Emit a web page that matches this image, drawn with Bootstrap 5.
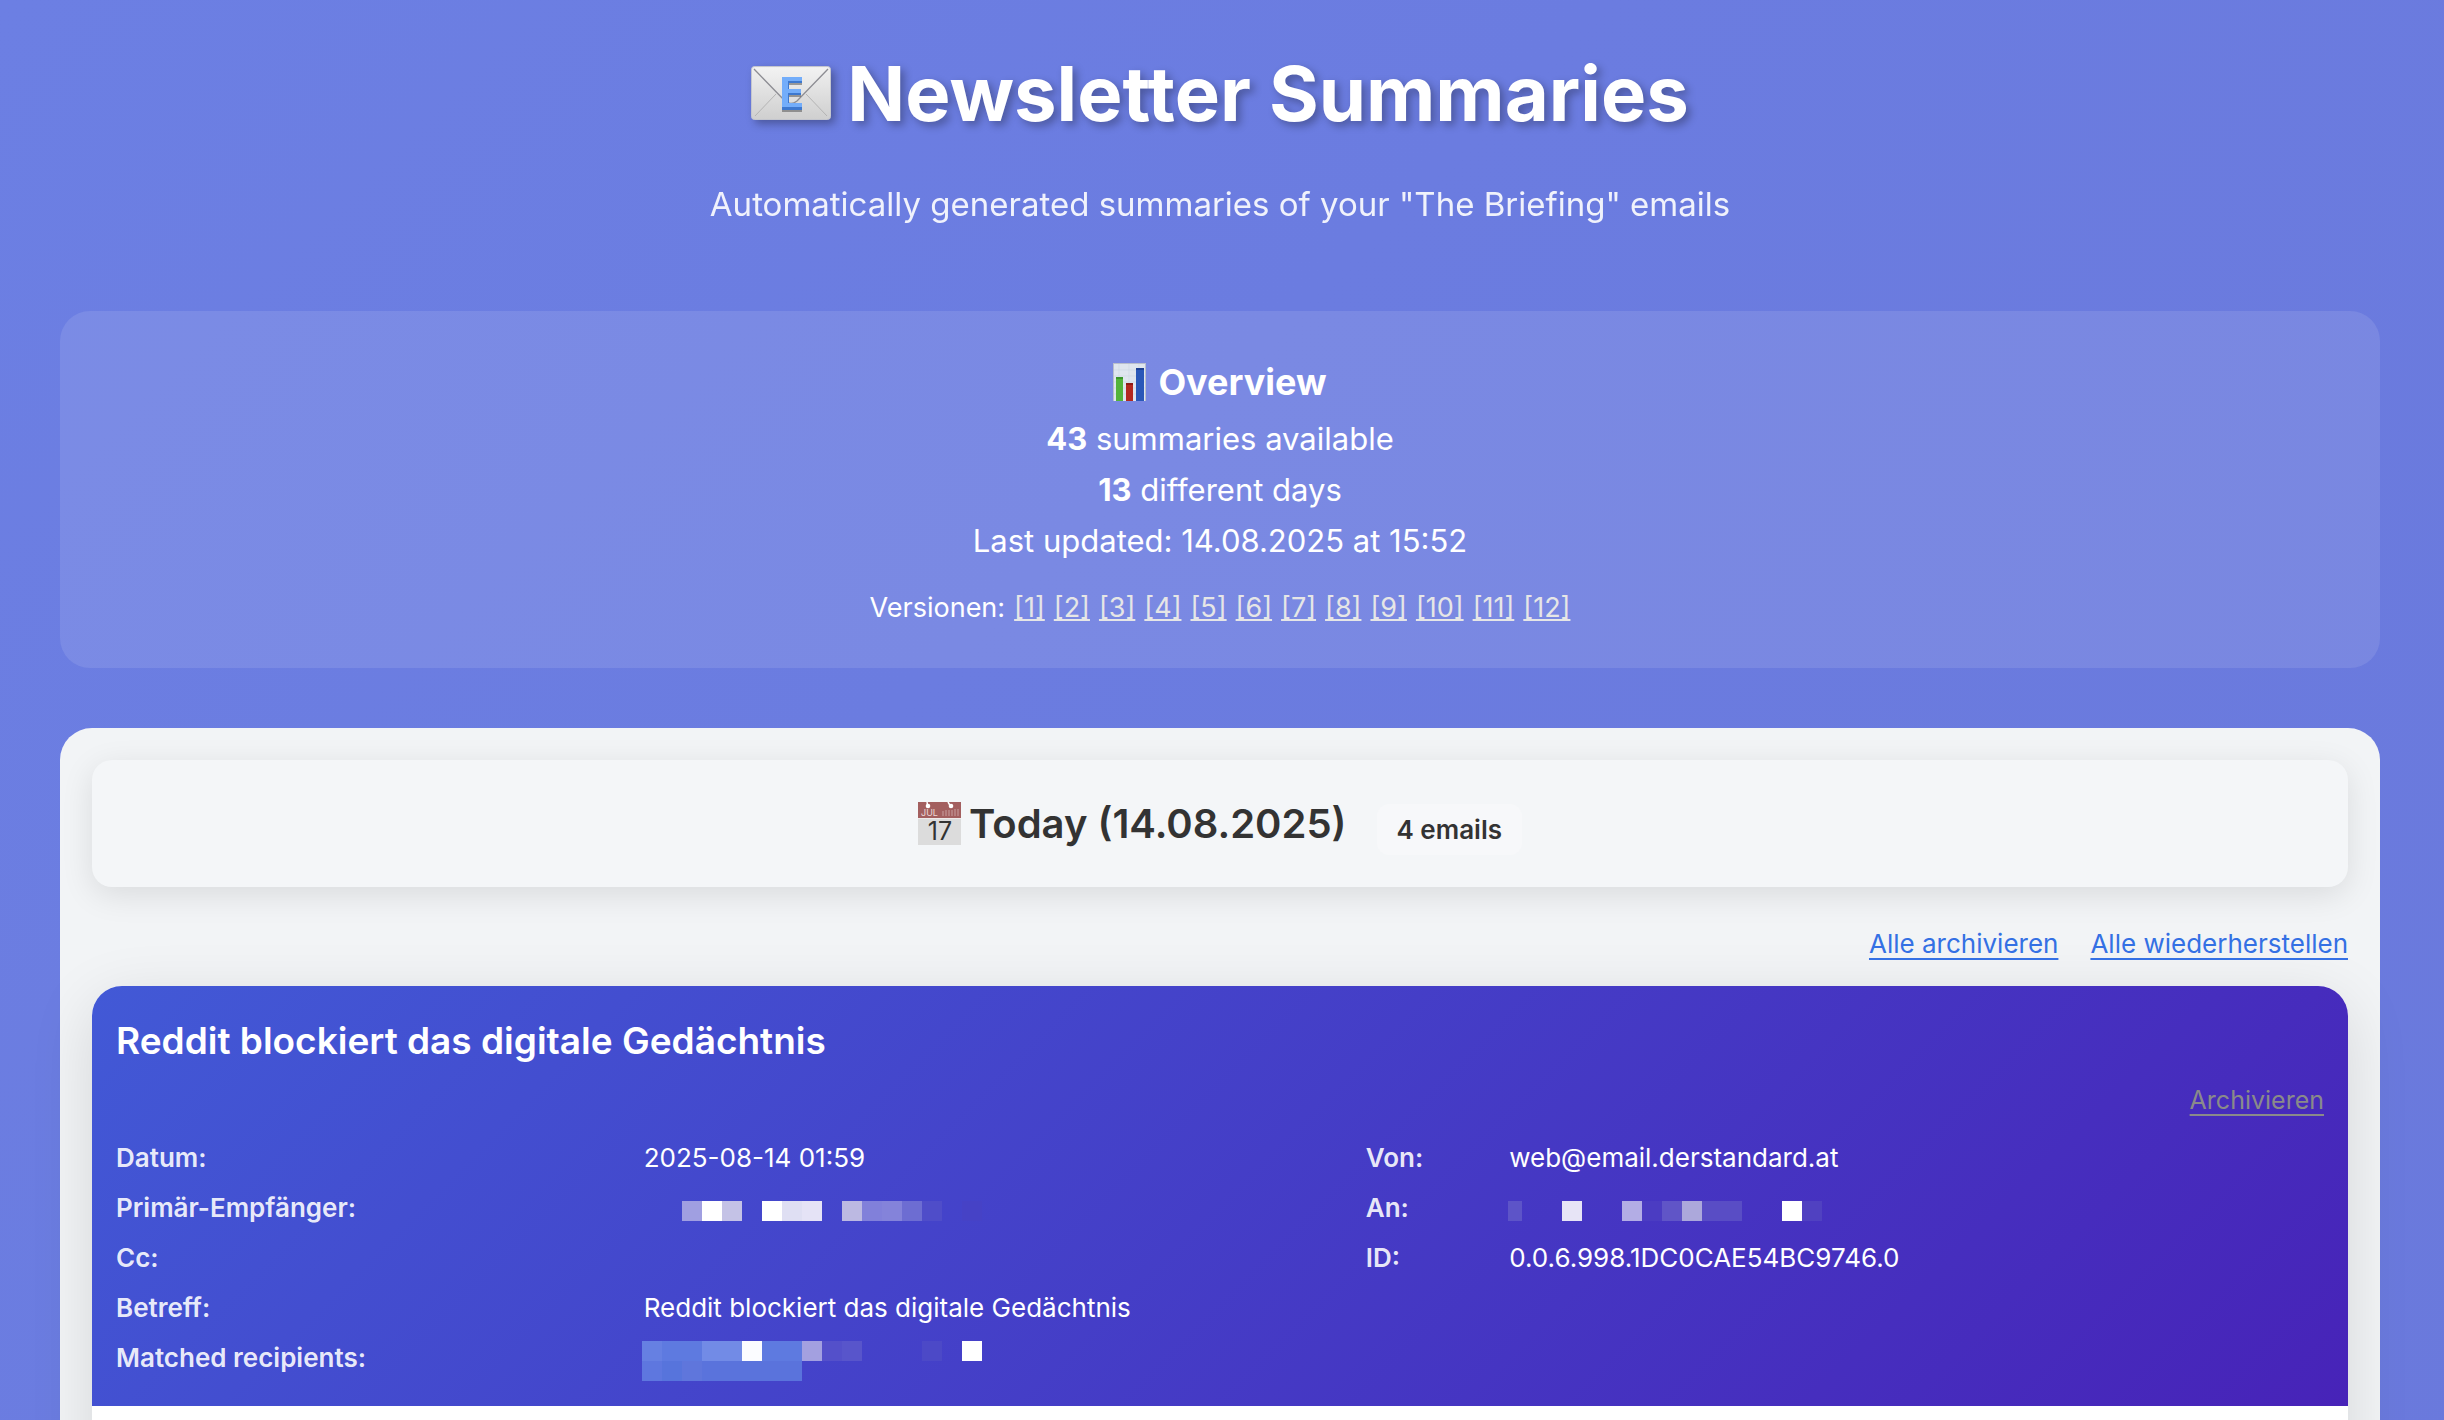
<!DOCTYPE html>
<html lang="de">
<head>
<meta charset="utf-8">
<meta name="viewport" content="width=device-width, initial-scale=1">
<title>Newsletter Summaries</title>
<link href="https://cdn.jsdelivr.net/npm/bootstrap@5.3.0/dist/css/bootstrap.min.css" rel="stylesheet">
<style>
  body {
    font-family: Inter, "Noto Sans", sans-serif;
    background: linear-gradient(135deg, #6c7fe3 0%, #6b7ce0 40%, #6a79dc 100%);
    min-height: 100vh;
  }
  .page-wrap { padding: 30px 64px 0 60px; }
  .page-title {
    font-size: 76px; line-height: 126px; font-weight: 700;
    text-shadow: 4px 4px 8px rgba(0, 0, 0, .3);
  }
  .page-title svg { filter: drop-shadow(4px 4px 4px rgba(0, 0, 0, .3)); }
  .page-subtitle { font-size: 33px; line-height: 56px; margin-top: 20px; opacity: .9; }
  .overview {
    margin-top: 79px; padding: 40px; border-radius: 30px;
    background: rgba(255, 255, 255, .1);
    font-size: 31px; line-height: 51px;
  }
  .overview h2 { font-size: 36px; line-height: 62px; font-weight: 700; }
  .versions { font-size: 27px; line-height: 44px; margin-top: 20px; gap: 9px; }
  .overview { padding-bottom: 38px; }
  .versions a { color: #e6e6e6; }
  .day-panel {
    margin-top: 60px; padding: 32px; border-radius: 32px;
    background: #f2f4f6;
  }
  .day-head {
    padding: 30px; border-radius: 20px; background: #f4f6f8; color: #333;
    box-shadow: 0 8px 32px rgba(0, 0, 0, .1);
  }
  .day-head h2 { font-size: 40px; line-height: 67px; font-weight: 600; }
  .day-count {
    font-size: 26px; line-height: 51px; font-weight: 600;
    padding: 0 20px; border-radius: 12px; background: #f7f8fa; margin: 12px 0 0 30px;
  }
  .bulk-links { font-size: 26px; line-height: 48px; margin: 33px 0 18px; gap: 32px; }
  .bulk-links a { color: #3470e4; }
  .bulk-links a, .item-link { text-decoration-thickness: 2px; text-underline-offset: 5px; }
  .mail-card {
    border-radius: 30px; overflow: hidden; background: #fff;
    box-shadow: 0 16px 64px rgba(0, 0, 0, .12);
  }
  .mail-head { padding: 24px 24px 23px; background: linear-gradient(135deg, #4259d6 0%, #4723b8 100%); }
  .mail-head h3 { font-size: 37px; line-height: 62px; font-weight: 600; }
  .item-link { font-size: 25px; line-height: 43px; margin: 7px 0 11px; color: #8a8a8a; }
  .meta-grid { table-layout: fixed; font-size: 26px; line-height: 50px; }
  .meta-grid th { font-weight: 600; color: rgba(255, 255, 255, .9); }
  .meta-grid th, .meta-grid td { padding: 0; height: 50px; text-align: left; white-space: nowrap; }
  .w-label { width: 23.9%; }
  .w-value { width: 32.7%; }
  .w-label-sm { width: 6.5%; }
  .meta-grid svg { display: block; overflow: visible; }
  .mail-body { height: 120px; }
</style>
<script src="https://cdn.jsdelivr.net/npm/bootstrap@5.3.0/dist/js/bootstrap.bundle.min.js"></script>
</head>
<body>
<div class="page-wrap">
  <header class="text-center text-white">
    <h1 class="page-title d-flex justify-content-center align-items-center mb-0">
      <svg class="me-3" width="80" height="54" viewBox="0 0 80 54" role="img" aria-label="E-Mail">
        <defs>
          <linearGradient id="env" x1="0" y1="0" x2="0" y2="1"><stop offset="0" stop-color="#f0f0f0"/><stop offset="1" stop-color="#cfcfcf"/></linearGradient>
          <linearGradient id="flap" x1="0" y1="0" x2="0" y2="1"><stop offset="0" stop-color="#f2f2f2"/><stop offset="1" stop-color="#dcdcdc"/></linearGradient>
        </defs>
        <rect x=".5" y=".5" width="79" height="53" rx="3" fill="url(#env)" stroke="#c4c6ce"/>
        <path d="M4 50 25 28M76 50 55 28" stroke="#b4b4b4" fill="none"/>
        <path d="M2 2 34 35Q40 40 46 35L78 2Z" fill="url(#flap)"/>
        <path d="M3 3 34 35Q40 40 46 35L77 3" stroke="#8d8d93" fill="none" stroke-width="1.3"/>
        <path d="M31 13H51V19H38V25H50V31H38V39H51V46H31Z" fill="#555" opacity=".55"/>
        <path d="M31 11H51V17H38V23H50V29H38V37H51V44H31Z" fill="#3d78cf"/>
        <path d="M31 11H51V15H37V23H50V27H37V37H51V41H31Z" fill="#73adfa"/>
      </svg>Newsletter Summaries</h1>
    <p class="page-subtitle mb-0">Automatically generated summaries of your "The Briefing" emails</p>
  </header>

  <section class="overview text-center text-white">
    <h2 class="d-flex justify-content-center align-items-center mb-0">
      <svg class="me-2" width="37" height="38" viewBox="0 0 37 38" aria-hidden="true">
        <rect x="0" y="0" width="33" height="38" fill="#b9bfcc"/>
        <rect x="1" y="1" width="31" height="37" fill="#dfe6ee"/>
        <path d="M1 7H32M1 13H32M1 19H32M1 25H32M1 31H32M6 1V38M16 1V38M26 1V38" stroke="#cfd8e4" stroke-width=".7"/>
        <rect x="3" y="14" width="7" height="24" fill="#53b33a"/><rect x="3" y="14" width="7" height="2" fill="#3b962a"/>
        <rect x="13" y="20" width="7" height="18" fill="#b3281f"/><rect x="13" y="20" width="7" height="2" fill="#8d1a14"/>
        <rect x="23" y="5" width="8" height="33" fill="#2a58b8"/><rect x="23" y="5" width="8" height="2" fill="#1c3f92"/>
      </svg>Overview</h2>
    <div><strong>43</strong> summaries available</div>
    <div><strong>13</strong> different days</div>
    <div>Last updated: 14.08.2025 at 15:52</div>
    <nav class="versions d-flex justify-content-center" aria-label="Versionen">
      <span>Versionen:</span>
      <a href="#v1">[1]</a><a href="#v2">[2]</a><a href="#v3">[3]</a><a href="#v4">[4]</a><a href="#v5">[5]</a><a href="#v6">[6]</a><a href="#v7">[7]</a><a href="#v8">[8]</a><a href="#v9">[9]</a><a href="#v10">[10]</a><a href="#v11">[11]</a><a href="#v12">[12]</a>
    </nav>
  </section>

  <main class="day-panel">
    <div class="day-head d-flex justify-content-center align-items-center">
      <h2 class="d-flex align-items-center mb-0">
        <svg width="43" height="43" viewBox="0 0 43 43" class="me-2" role="img" aria-label="Kalender">
          <rect width="43" height="43" fill="#dcdcdc"/>
          <rect width="43" height="16" fill="#a35f5f"/>
          <path d="M0 16.500H43" stroke="#f0eaea"/>
          <path d="M9 0 10 5M30 0 33 5" stroke="#fff" stroke-width="1.5"/>
          <circle cx="10" cy="4" r="2.300" fill="#fff"/><circle cx="33" cy="4" r="2.300" fill="#fff"/>
          <path d="M25 14V9M28 14V8M31 14V8M34 14V8M37 14V7M40 14V7" stroke="#bd8a8a" stroke-width="1.500"/>
          <text x="3" y="14" font-size="9" font-weight="400" fill="#ecd8d8">JUL</text>
          <text x="22" y="38" font-size="25" font-weight="400" text-anchor="middle" fill="#333">17</text>
        </svg>
        <span>Today (14.08.2025)</span></h2>
      <span class="day-count">4 emails</span>
    </div>

    <div class="bulk-links d-flex justify-content-end">
      <a href="#archive-all">Alle archivieren</a>
      <a href="#restore-all">Alle wiederherstellen</a>
    </div>

    <article class="mail-card">
      <div class="mail-head text-white">
        <h3 class="mb-0">Reddit blockiert das digitale Gedächtnis</h3>
        <div class="d-flex justify-content-end"><a class="item-link" href="#archive">Archivieren</a></div>
        <table class="meta-grid w-100">
          <colgroup><col class="w-label"><col class="w-value"><col class="w-label-sm"><col></colgroup>
          <tbody>
            <tr><th scope="row">Datum:</th><td>2025-08-14 01:59</td><th scope="row">Von:</th><td>web@email.derstandard.at</td></tr>
            <tr>
              <th scope="row">Primär-Empfänger:</th>
              <td><svg width="360" height="50" viewBox="0 0 360 50" shape-rendering="crispEdges" aria-hidden="true">
                <rect x="38" y="18" width="20" height="20" fill="#a09fe1"/><rect x="58" y="18" width="20" height="20" fill="#fff"/><rect x="78" y="18" width="20" height="20" fill="#c4c2e6"/>
                <rect x="118" y="18" width="20" height="20" fill="#fff"/><rect x="138" y="18" width="20" height="20" fill="#dfdff3"/><rect x="158" y="18" width="20" height="20" fill="#e5e3f6"/>
                <rect x="198" y="18" width="20" height="20" fill="#bcb9e2"/><rect x="218" y="18" width="20" height="20" fill="#8180da"/><rect x="238" y="18" width="20" height="20" fill="#8483da"/><rect x="258" y="18" width="20" height="20" fill="#6d6dd2"/><rect x="278" y="18" width="20" height="20" fill="#4f4dc9"/><rect x="318" y="18" width="20" height="20" fill="#4642c6"/>
              </svg></td>
              <th scope="row">An:</th>
              <td><svg width="340" height="50" viewBox="0 0 340 50" shape-rendering="crispEdges" aria-hidden="true">
                <rect x="-1" y="18" width="14" height="20" fill="#5d54c8"/><rect x="53" y="18" width="20" height="20" fill="#e7e4f6"/>
                <rect x="113" y="18" width="20" height="20" fill="#b3ade5"/><rect x="133" y="18" width="20" height="20" fill="#4b3cc2"/><rect x="153" y="18" width="20" height="20" fill="#6055c7"/><rect x="173" y="18" width="20" height="20" fill="#aca8db"/><rect x="193" y="18" width="40" height="20" fill="#594dc5"/>
                <rect x="273" y="18" width="20" height="20" fill="#fff"/><rect x="293" y="18" width="20" height="20" fill="#5041c1"/>
              </svg></td>
            </tr>
            <tr><th scope="row">Cc:</th><td></td><th scope="row">ID:</th><td>0.0.6.998.1DC0CAE54BC9746.0</td></tr>
            <tr><th scope="row">Betreff:</th><td colspan="3">Reddit blockiert das digitale Gedächtnis</td></tr>
            <tr>
              <th scope="row">Matched recipients:</th>
              <td colspan="3"><svg width="340" height="50" viewBox="0 0 340 50" shape-rendering="crispEdges" aria-hidden="true">
                <rect x="-2" y="8" width="20" height="20" fill="#6680e2"/><rect x="18" y="8" width="40" height="20" fill="#5e7ae0"/><rect x="58" y="8" width="40" height="20" fill="#728be6"/><rect x="98" y="8" width="20" height="20" fill="#fbfcff"/><rect x="118" y="8" width="40" height="20" fill="#5e7ae0"/><rect x="158" y="8" width="20" height="20" fill="#a3a0e0"/><rect x="178" y="8" width="20" height="20" fill="#5450ca"/><rect x="198" y="8" width="20" height="20" fill="#5855cb"/><rect x="278" y="8" width="20" height="20" fill="#4c49c7"/><rect x="318" y="8" width="20" height="20" fill="#fff"/>
                <rect x="-2" y="28" width="20" height="20" fill="#5e77df"/><rect x="18" y="28" width="20" height="20" fill="#5774dc"/><rect x="38" y="28" width="20" height="20" fill="#5f76dc"/><rect x="58" y="28" width="100" height="20" fill="#5a73dc"/>
              </svg></td>
            </tr>
          </tbody>
        </table>
      </div>
      <div class="mail-body bg-white"></div>
    </article>
  </main>
</div>
</body>
</html>
